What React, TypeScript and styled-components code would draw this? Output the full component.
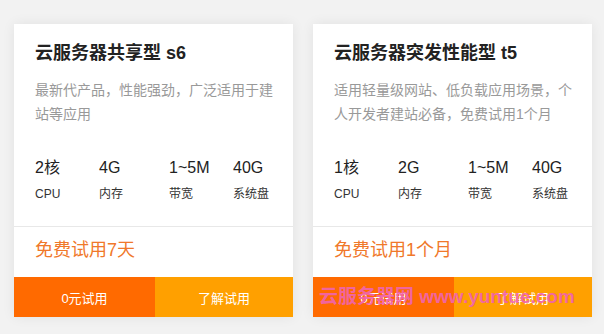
import React from "react";
import styled, { createGlobalStyle } from "styled-components";

const Global = createGlobalStyle`
  html, body { margin: 0; padding: 0; background: #f2f2f2; }
  body { font-family: "Liberation Sans", "Noto Sans CJK SC", sans-serif; }
  #root { width: 604px; height: 334px; }
`;

const Page = styled.div`
  position: relative;
  width: 604px;
  height: 334px;
  box-sizing: border-box;
  padding: 24px 12px 0 14px;
  display: flex;
  gap: 20px;
  align-items: flex-start;
  background: #f2f2f2;
`;

const Card = styled.div`
  width: 279px;
  height: 293px;
  background: #fff;
  box-shadow: 0 0 12px rgba(0, 0, 0, 0.07);
  display: flex;
  flex-direction: column;
`;

const Body = styled.div`
  padding: 16px 18px 22px 21px;
  border-bottom: 1px solid #e8e8e8;
`;

const Title = styled.h3`
  margin: 0;
  font-size: 18px;
  line-height: 26px;
  font-weight: bold;
  color: #222;
`;

const Desc = styled.p`
  margin: 12px 0 0;
  height: 48px;
  font-size: 14px;
  line-height: 24px;
  color: #999;
`;

const Specs = styled.div`
  margin-top: 30px;
  display: grid;
  grid-template-columns: 64px 70px 64px auto;
`;

const Spec = styled.div`
  display: flex;
  flex-direction: column;
  gap: 4px;
`;

const SpecValue = styled.span`
  font-size: 16px;
  line-height: 24px;
  color: #222;
`;

const SpecLabel = styled.span`
  font-size: 12px;
  line-height: 20px;
  color: #333;
`;

const Price = styled.div`
  padding: 11px 21px 15px;
  font-size: 18px;
  line-height: 24px;
  color: #f0782a;
`;

const Actions = styled.div`
  display: flex;
  height: 40px;
  margin-top: auto;
`;

const ActionButton = styled.a<{ $tone: "primary" | "secondary" }>`
  flex: ${(p) => (p.$tone === "primary" ? "0 0 141px" : "1 1 auto")};
  display: flex;
  align-items: center;
  justify-content: center;
  background: ${(p) => (p.$tone === "primary" ? "#ff6a00" : "#ffa000")};
  color: #fff;
  font-size: 13px;
  text-decoration: none;
  cursor: pointer;
`;

const Watermark = styled.div`
  position: absolute;
  left: 319px;
  top: 284px;
  font-size: 19px;
  line-height: 26px;
  font-weight: bold;
  color: rgba(240, 100, 175, 0.92);
  white-space: nowrap;
  pointer-events: none;
`;

type Product = {
  title: string;
  desc: string;
  specs: { value: string; label: string }[];
  price: string;
};

const products: Product[] = [
  {
    title: "云服务器共享型 s6",
    desc: "最新代产品，性能强劲，广泛适用于建站等应用",
    specs: [
      { value: "2核", label: "CPU" },
      { value: "4G", label: "内存" },
      { value: "1~5M", label: "带宽" },
      { value: "40G", label: "系统盘" },
    ],
    price: "免费试用7天",
  },
  {
    title: "云服务器突发性能型 t5",
    desc: "适用轻量级网站、低负载应用场景，个人开发者建站必备，免费试用1个月",
    specs: [
      { value: "1核", label: "CPU" },
      { value: "2G", label: "内存" },
      { value: "1~5M", label: "带宽" },
      { value: "40G", label: "系统盘" },
    ],
    price: "免费试用1个月",
  },
];

export default function App() {
  return (
    <>
      <Global />
      <Page>
        {products.map((p) => (
          <Card key={p.title}>
            <Body>
              <Title>{p.title}</Title>
              <Desc>{p.desc}</Desc>
              <Specs>
                {p.specs.map((s) => (
                  <Spec key={s.label}>
                    <SpecValue>{s.value}</SpecValue>
                    <SpecLabel>{s.label}</SpecLabel>
                  </Spec>
                ))}
              </Specs>
            </Body>
            <Price>{p.price}</Price>
            <Actions>
              <ActionButton $tone="primary">0元试用</ActionButton>
              <ActionButton $tone="secondary">了解试用</ActionButton>
            </Actions>
          </Card>
        ))}
        <Watermark>云服务器网 www.yuntue.com</Watermark>
      </Page>
    </>
  );
}
